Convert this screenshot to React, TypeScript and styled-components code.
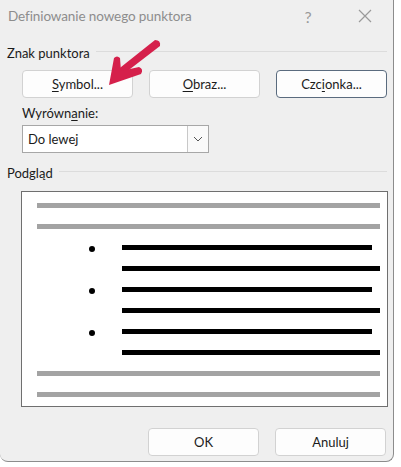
import React from "react";
import styled, { createGlobalStyle } from "styled-components";

const Global = createGlobalStyle`
  html, body { margin: 0; padding: 0; background: #ffffff; }
  body { font-family: Lato, "Noto Sans", sans-serif; }
`;

const Dialog = styled.div`
  position: relative;
  width: 394px;
  height: 462px;
  background: #efefef;
  border-right: 1px solid #8c8c8c;
  border-bottom: 1px solid #8c8c8c;
  border-bottom-right-radius: 8px;
  border-bottom-left-radius: 8px;
  box-sizing: border-box;
  display: flex;
  flex-direction: column;
  color: #1b1b1b;
  font-size: 13px;
  overflow: hidden;
`;

const TitleBar = styled.div`
  height: 38px;
  display: flex;
  align-items: center;
  padding-left: 8px;
  box-sizing: border-box;
  padding-bottom: 6px;
`;

const Title = styled.div`
  flex: 1;
  font-size: 13.5px;
  letter-spacing: -0.1px;
  color: #8d8d8d;
`;

const HelpMark = styled.div`
  width: 20px;
  font-size: 16px;
  color: #9a9a9a;
  margin-right: 40px;
  text-align: center;
`;

const CloseBox = styled.div`
  width: 14px;
  height: 14px;
  margin-right: 21px;
  display: flex;
`;

const Body = styled.div`
  display: flex;
  flex-direction: column;
  padding: 6px 6px 0 7px;
`;

const GroupHeader = styled.div`
  display: flex;
  align-items: center;
  height: 18px;
  gap: 6px;
`;

const GroupRule = styled.div`
  flex: 1;
  height: 1px;
  background: #dcdcdc;
  margin-top: -4px;
`;

const ButtonRow = styled.div<{ $left: number; $top?: number }>`
  display: flex;
  gap: 16px;
  padding-left: ${(p) => p.$left}px;
  margin-top: ${(p) => p.$top ?? 0}px;
`;

const Button = styled.div<{ $default?: boolean }>`
  width: 111px;
  height: 28px;
  box-sizing: border-box;
  background: #fdfdfd;
  border: 1px solid ${(p) => (p.$default ? "#5a6b7e" : "#d2d2d2")};
  border-radius: 4px;
  display: flex;
  align-items: center;
  justify-content: center;
  font-size: 13px;
  color: #1b1b1b;
`;

const Key = styled.span`
  text-decoration: underline;
  text-underline-offset: 2px;
`;

const FieldLabel = styled.div`
  margin: 7px 0 0 15px;
  height: 18px;
`;

const Select = styled.div`
  margin: 2px 0 0 15px;
  width: 187px;
  height: 28px;
  box-sizing: border-box;
  background: #ffffff;
  border: 1px solid #a7a7a7;
  display: flex;
`;

const SelectValue = styled.div`
  flex: 1;
  display: flex;
  align-items: center;
  padding-left: 5px;
`;

const SelectArrow = styled.div`
  width: 20px;
  border-left: 1px solid #c8c8c8;
  background: #fafafa;
  display: flex;
  align-items: center;
  justify-content: center;
`;

const PreviewHeader = styled(GroupHeader)`
  margin-top: 11px;
`;

const Preview = styled.div`
  margin: 9px 0 0 14px;
  width: 367px;
  height: 216px;
  box-sizing: border-box;
  background: #ffffff;
  border: 1px solid #6f6f6f;
  padding: 11px 7px 0 15px;
  display: flex;
  flex-direction: column;
  gap: 16px;
`;

const GrayLine = styled.div`
  height: 5px;
  background: #a3a3a3;
`;

const ItemRow = styled.div`
  display: grid;
  grid-template-columns: 85px 1fr;
  height: 5px;
  align-items: center;
`;

const DotCell = styled.div`
  position: relative;
  height: 5px;
`;

const Dot = styled.div`
  position: absolute;
  left: 52px;
  top: 0.5px;
  width: 6px;
  height: 6px;
  border-radius: 50%;
  background: #000;
`;

const BlackLine = styled.div<{ $short?: boolean }>`
  height: 5px;
  background: #000;
  margin-right: ${(p) => (p.$short ? 8 : 0)}px;
`;

const Footer = styled(ButtonRow)`
  margin-top: 21px;
`;

const Annotation = styled.svg`
  position: absolute;
  left: 0;
  top: 0;
  pointer-events: none;
`;

const items = [
  { dot: true, short: true },
  { dot: false, short: false },
  { dot: true, short: true },
  { dot: false, short: false },
  { dot: true, short: true },
  { dot: false, short: false },
];

export default function App() {
  return (
    <>
      <Global />
      <Dialog>
        <TitleBar>
          <Title>Definiowanie nowego punktora</Title>
          <HelpMark>?</HelpMark>
          <CloseBox>
            <svg width="14" height="14" viewBox="0 0 14 14">
              <path d="M1 1 L13 13 M13 1 L1 13" stroke="#9a9a9a" strokeWidth="1.2" fill="none" />
            </svg>
          </CloseBox>
        </TitleBar>
        <Body>
          <GroupHeader>
            <span>Znak punktora</span>
            <GroupRule />
          </GroupHeader>
          <ButtonRow $left={15} $top={8}>
            <Button>
              <span>
                <Key>S</Key>ymbol...
              </span>
            </Button>
            <Button>
              <span>
                <Key>O</Key>braz...
              </span>
            </Button>
            <Button $default>
              <span>
                Czc<Key>i</Key>onka...
              </span>
            </Button>
          </ButtonRow>
          <FieldLabel>
            Wyrówn<Key>a</Key>nie:
          </FieldLabel>
          <Select>
            <SelectValue>Do lewej</SelectValue>
            <SelectArrow>
              <svg width="10" height="6" viewBox="0 0 10 6">
                <path d="M1 1 L5 5 L9 1" stroke="#555" strokeWidth="1" fill="none" />
              </svg>
            </SelectArrow>
          </Select>
          <PreviewHeader>
            <span>Podgląd</span>
            <GroupRule />
          </PreviewHeader>
          <Preview>
            <GrayLine />
            <GrayLine />
            {items.map((it, i) => (
              <ItemRow key={i}>
                <DotCell>{it.dot && <Dot />}</DotCell>
                <BlackLine $short={it.short} />
              </ItemRow>
            ))}
            <GrayLine />
            <GrayLine />
          </Preview>
          <Footer $left={141}>
            <Button>OK</Button>
            <Button>Anuluj</Button>
          </Footer>
        </Body>
        <Annotation width="394" height="200" viewBox="0 0 394 200">
          <path d="M155 40 Q161 40 160 46 L121 76 L116 71 Z" fill="#d5204b" />
          <path d="M109 85 L114 58 Q117 55 120 58 L121 71 L139 67 Q144 69 141 74 Z" fill="#d5204b" />
        </Annotation>
      </Dialog>
    </>
  );
}
